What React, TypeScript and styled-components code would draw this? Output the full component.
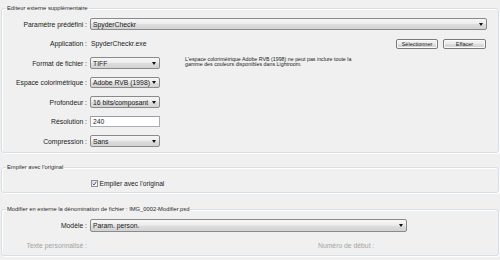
import React from 'react';
import styled, { createGlobalStyle } from 'styled-components';

const GlobalStyle = createGlobalStyle`
  html, body {
    margin: 0;
    padding: 0;
    background: #f0f0f0;
  }
  body {
    font-family: "Liberation Sans", Arial, sans-serif;
    color: #1a1a1a;
  }
`;

const Page = styled.div`
  width: 500px;
  height: 260px;
  box-sizing: border-box;
  padding: 4.5px 1px 0 1px;
  background: #f0f0f0;
  overflow: hidden;
`;

// Windows 7 style etched group box
const Group = styled.fieldset<{ $top: number; $pt: number; $pb: number }>`
  margin: ${({ $top }) => $top}px 0 0 0;
  padding: ${({ $pt }) => $pt}px 11px ${({ $pb }) => $pb}px 0;
  border: 1px solid #d5dfe5;
  border-radius: 3px;
  box-shadow: inset 1px 1px 0 #ffffff, 1px 1px 0 #ffffff;
  min-width: 0;
`;

const Legend = styled.legend`
  font-size: 5.8px;
  line-height: 7px;
  padding: 0 1px;
  margin-left: 4px;
  color: #1e1e1e;
  white-space: nowrap;
`;

const Form = styled.div<{ $cols: string }>`
  display: grid;
  grid-template-columns: ${({ $cols }) => $cols};
  grid-auto-rows: 19.5px;
  column-gap: 3px;
  align-items: center;
`;

const Label = styled.span<{ $disabled?: boolean; $left?: boolean }>`
  font-size: 6.8px;
  text-align: ${({ $left }) => ($left ? 'left' : 'right')};
  white-space: nowrap;
  color: ${({ $disabled }) => ($disabled ? '#a3a3a3' : '#1a1a1a')};
`;

const Cell = styled.div<{ $span?: boolean }>`
  grid-column: ${({ $span }) => ($span ? '2 / -1' : 'auto')};
  display: flex;
  align-items: center;
  justify-content: space-between;
  min-width: 0;
`;

const Combo = styled.div<{ $h?: number; $w?: number }>`
  flex: ${({ $w }) => ($w ? 'none' : '1')};
  width: ${({ $w }) => ($w ? `${$w}px` : 'auto')};
  box-sizing: border-box;
  height: ${({ $h }) => $h ?? 11.5}px;
  display: flex;
  align-items: center;
  justify-content: space-between;
  padding: 0 3px 0 2px;
  border: 1px solid #8a8a8a;
  border-radius: 2px;
  background: linear-gradient(#f6f6f6 0%, #ececec 48%, #dedede 52%, #d2d2d2 100%);
  font-size: 6.8px;
  color: #1a1a1a;
  white-space: nowrap;

  &::after {
    content: '';
    border-left: 2.5px solid transparent;
    border-right: 2.5px solid transparent;
    border-top: 3px solid #111;
  }
`;

const TextInput = styled.div`
  flex: 1;
  box-sizing: border-box;
  height: 11.5px;
  display: flex;
  align-items: center;
  padding-left: 2px;
  border: 1px solid #abadb3;
  border-top-color: #9a9ca4;
  background: #ffffff;
  font-size: 6.8px;
`;

const Value = styled.span`
  font-size: 6.8px;
  padding-left: 1px;
`;

const Buttons = styled.div`
  display: flex;
  gap: 5px;
  margin-right: 1px;
`;

const Button = styled.div<{ $w: number }>`
  box-sizing: border-box;
  width: ${({ $w }) => $w}px;
  height: 10px;
  display: flex;
  align-items: center;
  justify-content: center;
  border: 1px solid #7a7a7a;
  border-radius: 2px;
  background: linear-gradient(#f4f4f4 0%, #ebebeb 48%, #dddddd 52%, #cfcfcf 100%);
  box-shadow: inset 0 0 0 1px #fbfbfb;
  font-size: 5.5px;
  color: #1a1a1a;
`;

const Note = styled.div`
  font-size: 5.3px;
  line-height: 5.5px;
  margin-left: 22px;
  color: #1a1a1a;
  white-space: nowrap;
  align-self: center;
  transform: translateY(-1px);
`;

const CheckRow = styled.label`
  height: 14px;
  display: flex;
  align-items: center;
  gap: 1.5px;
  padding-left: 89px;
  font-size: 6.7px;
  color: #1a1a1a;
`;

const Box = styled.span`
  box-sizing: border-box;
  width: 7px;
  height: 7px;
  display: flex;
  align-items: center;
  justify-content: center;
  border: 1px solid #8f8f8f;
  background: linear-gradient(135deg, #dcdcdc, #ffffff);
`;

const Spacer = styled.span`
  min-width: 0;
`;

const Check = () => (
  <Box>
    <svg width="5" height="5" viewBox="0 0 10 10">
      <path d="M1.5 5.5 L4 8 L8.5 1.5" fill="none" stroke="#3a56a8" strokeWidth="2" />
    </svg>
  </Box>
);

export default function App() {
  return (
    <>
      <GlobalStyle />
      <Page>
        <Group $top={0} $pt={2.75} $pb={1.25}>
          <Legend>Editeur externe supplémentaire</Legend>
          <Form $cols="85px 70px 1fr">
            <Label>Paramètre prédéfini :</Label>
            <Cell $span>
              <Combo>SpyderCheckr</Combo>
            </Cell>

            <Label>Application :</Label>
            <Cell $span>
              <Value>SpyderCheckr.exe</Value>
              <Buttons>
                <Button $w={42}>Sélectionner</Button>
                <Button $w={43}>Effacer</Button>
              </Buttons>
            </Cell>

            <Label>Format de fichier :</Label>
            <Cell>
              <Combo>TIFF</Combo>
            </Cell>
            <Note>
              L'espace colorimétrique Adobe RVB (1998) ne peut pas inclure toute la
              <br />
              gamme des couleurs disponibles dans Lightroom.
            </Note>

            <Label>Espace colorimétrique :</Label>
            <Cell>
              <Combo>Adobe RVB (1998)</Combo>
            </Cell>
            <Spacer />

            <Label>Profondeur :</Label>
            <Cell>
              <Combo>16 bits/composant</Combo>
            </Cell>
            <Spacer />

            <Label>Résolution :</Label>
            <Cell>
              <TextInput>240</TextInput>
            </Cell>
            <Spacer />

            <Label>Compression :</Label>
            <Cell>
              <Combo>Sans</Combo>
            </Cell>
            <Spacer />
          </Form>
        </Group>

        <Group $top={10.5} $pt={5.5} $pb={2}>
          <Legend>Empiler avec l'original</Legend>
          <CheckRow>
            <Check />
            Empiler avec l'original
          </CheckRow>
        </Group>

        <Group $top={12.5} $pt={3.25} $pb={0.5}>
          <Legend>Modifier en externe la dénomination de fichier : IMG_0002-Modifier.psd</Legend>
          <Form $cols="85px 225px 1fr">
            <Label>Modèle :</Label>
            <Cell $span>
              <Combo $h={13} $w={317}>Param. person.</Combo>
            </Cell>

            <Label $disabled>Texte personnalisé :</Label>
            <Spacer />
            <Label $disabled $left>Numéro de début :</Label>
          </Form>
        </Group>
      </Page>
    </>
  );
}
